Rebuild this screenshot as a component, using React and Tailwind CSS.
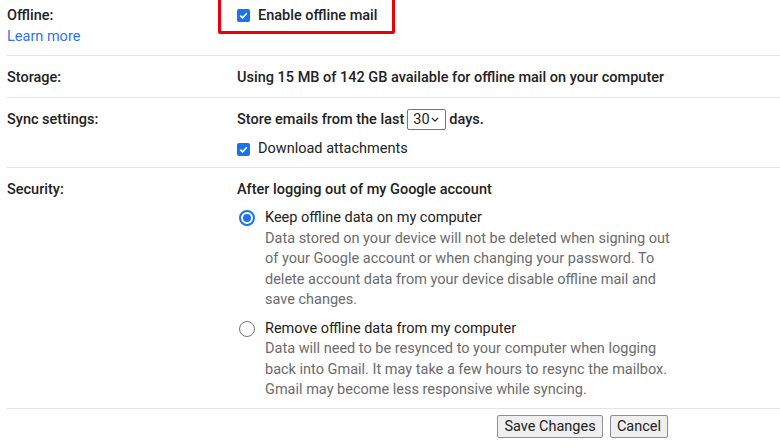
import React from "react";

const Checkbox = () => (
  <span className="flex h-[13px] w-[13px] shrink-0 items-center justify-center rounded-[2px] bg-[#1a73e8]">
    <svg viewBox="0 0 12 12" className="h-[11px] w-[11px]">
      <path d="M2.5 6.2 L5 8.6 L9.6 3.6" fill="none" stroke="#fff" strokeWidth="1.8" />
    </svg>
  </span>
);

const Radio = ({ checked }) =>
  checked ? (
    <span className="flex h-[16px] w-[16px] items-center justify-center rounded-full border-[2px] border-[#1a73e8]">
      <span className="h-[8px] w-[8px] rounded-full bg-[#1a73e8]" />
    </span>
  ) : (
    <span className="block h-[16px] w-[16px] rounded-full border border-[#767676]" />
  );

const Option = ({ checked, title, children }) => (
  <div className="flex">
    <div className="w-[28px] pl-[2px] pt-[2px]">
      <Radio checked={checked} />
    </div>
    <div className="leading-[20.5px]">
      <div className="text-[#222]">{title}</div>
      <div className="w-[408px] text-[#6b6b6b]">{children}</div>
    </div>
  </div>
);

const App = () => {
  return (
    <div className="h-[448px] w-[780px] overflow-hidden bg-white pl-[7px] font-['Roboto',sans-serif] text-[14.5px] text-[#222]">
      <div className="flex h-[56px] border-b border-[#e3e3e3] pt-[5px]">
        <div className="w-[230px] leading-[21px]">
          <div className="font-medium">Offline:</div>
          <a className="text-[#2f74e6]" href="#">
            Learn more
          </a>
        </div>
        <div className="relative flex h-[21px] items-center gap-[8px] font-medium">
          <Checkbox />
          <span>Enable offline mail</span>
          <div className="absolute left-[-19px] top-[-10px] h-[39px] w-[177px] rounded-[2px] border-[3px] border-[#e8000b]" />
        </div>
      </div>

      <div className="flex h-[42px] items-center border-b border-[#e3e3e3] pt-[2px] font-medium">
        <div className="w-[230px]">Storage:</div>
        <div>Using 15 MB of 142 GB available for offline mail on your computer</div>
      </div>

      <div className="flex h-[70px] border-b border-[#e3e3e3] pt-[11px]">
        <div className="w-[230px] font-medium leading-[21px]">Sync settings:</div>
        <div>
          <div className="flex h-[21px] items-center font-medium">
            <span>Store emails from the last</span>
            <span className="mx-[3px] flex h-[21px] w-[39px] items-center justify-between rounded-[2px] border border-[#767676] pl-[5px] pr-[6px] font-normal">
              30
              <svg viewBox="0 0 10 6" className="h-[5px] w-[8px]">
                <path d="M1 1 L5 5 L9 1" fill="none" stroke="#222" strokeWidth="1.6" />
              </svg>
            </span>
            <span>days.</span>
          </div>
          <div className="mt-[9px] flex h-[20px] items-center gap-[8px]">
            <Checkbox />
            <span>Download attachments</span>
          </div>
        </div>
      </div>

      <div className="flex h-[241px] border-b border-[#e3e3e3] pt-[12px]">
        <div className="w-[230px] font-medium leading-[20px]">Security:</div>
        <div>
          <div className="font-medium leading-[20px]">After logging out of my Google account</div>
          <div className="mt-[8px] flex flex-col gap-[8px]">
            <Option checked title="Keep offline data on my computer">
              Data stored on your device will not be deleted when signing out of your Google account or when changing
              your password. To delete account data from your device disable offline mail and save changes.
            </Option>
            <Option title="Remove offline data from my computer">
              Data will need to be resynced to your computer when logging back into Gmail. It may take a few hours to
              resync the mailbox. Gmail may become less responsive while syncing.
            </Option>
          </div>
        </div>
      </div>

      <div className="flex gap-[7px] pl-[490px] pt-[6px]">
        <button className="h-[23px] w-[106px] rounded-[2px] border border-[#8f8f8f] bg-[#efefef] text-[14.5px] text-[#222]">
          Save Changes
        </button>
        <button className="h-[23px] w-[58px] rounded-[2px] border border-[#8f8f8f] bg-[#efefef] text-[14.5px] text-[#222]">
          Cancel
        </button>
      </div>
    </div>
  );
};

export default App;
